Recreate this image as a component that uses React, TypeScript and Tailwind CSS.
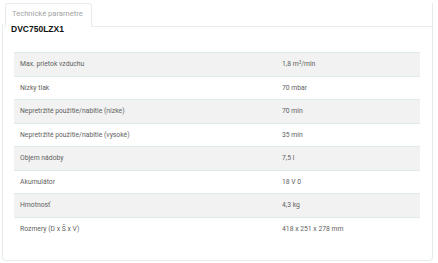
const rows: [string, React.ReactNode][] = [
  ["Max. prietok vzduchu", <>1,8 m<sup className="text-[4.5px]">3</sup>/min</>],
  ["Nízky tlak", "70 mbar"],
  ["Nepretržité použitie/nabitie (nízke)", "70 min"],
  ["Nepretržité použitie/nabitie (vysoké)", "35 min"],
  ["Objem nádoby", "7,5 l"],
  ["Akumulátor", "18 V 0"],
  ["Hmotnosť", "4,3 kg"],
  ["Rozmery (D x Š x V)", "418 x 251 x 278 mm"],
];

const App = (): JSX.Element => {
  return (
    <div className="w-[438px] h-[263px] bg-white pt-[3px] pl-[2px] font-['Roboto',sans-serif]">
      <div className="w-[431px]">
        <div className="flex">
          <div className="w-[3px] h-[24px]" />
          <div className="w-[87px] h-[24px] border border-b-0 border-[#e4ecec] rounded-t-[3px] bg-white pl-[6px] pt-[5px] text-[7.6px] leading-[10px]">
            <div className="text-[#a3a3a3] whitespace-nowrap">Technické parametre</div>
          </div>
          <div className="flex-1 h-[24px] border-b border-r border-[#e4ecec]" />
        </div>
        <div className="border border-t-0 border-[#e4ecec] rounded-b-[4px] pb-[20px]">
          <h2 className="-mt-[3px] pl-[8px] text-[8.5px] leading-[10px] font-bold text-[#111] font-['Liberation_Sans',sans-serif]">
            DVC750LZX1
          </h2>
          <div className="mt-[18px] ml-[11px] w-[406px]">
            {rows.map(([label, value], i) => (
              <div
                key={label}
                className={`flex items-center h-[23.5px] border-t border-[#dfeaec] text-[6.8px] leading-[10px] text-[#5f5f5f] ${
                  i % 2 === 0 ? "bg-[#f2f2f2]" : "bg-white"
                }`}
              >
                <div className="w-[262px] pl-[6px]">{label}</div>
                <div className="flex-1 pl-[6px]">{value}</div>
              </div>
            ))}
          </div>
        </div>
      </div>
    </div>
  );
};

export default App;
